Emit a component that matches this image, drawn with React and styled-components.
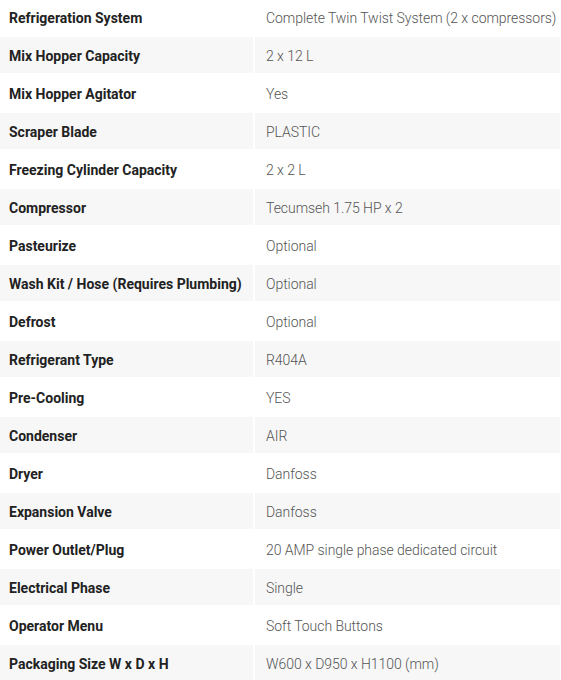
import React from "react";
import styled, { createGlobalStyle } from "styled-components";

const GlobalStyle = createGlobalStyle`
  html, body {
    margin: 0;
    padding: 0;
    background: #ffffff;
  }
  body {
    font-family: Roboto, "Liberation Sans", sans-serif;
  }
`;

const specs = [
  ["Refrigeration System", "Complete Twin Twist System (2 x compressors)"],
  ["Mix Hopper Capacity", "2 x 12 L"],
  ["Mix Hopper Agitator", "Yes"],
  ["Scraper Blade", "PLASTIC"],
  ["Freezing Cylinder Capacity", "2 x 2 L"],
  ["Compressor", "Tecumseh 1.75 HP x 2"],
  ["Pasteurize", "Optional"],
  ["Wash Kit / Hose (Requires Plumbing)", "Optional"],
  ["Defrost", "Optional"],
  ["Refrigerant Type", "R404A"],
  ["Pre-Cooling", "YES"],
  ["Condenser", "AIR"],
  ["Dryer", "Danfoss"],
  ["Expansion Valve", "Danfoss"],
  ["Power Outlet/Plug", "20 AMP single phase dedicated circuit"],
  ["Electrical Phase", "Single"],
  ["Operator Menu", "Soft Touch Buttons"],
  ["Packaging Size W x D x H", "W600 x D950 x H1100 (mm)"]
];

const SpecTable = styled.div`
  display: grid;
  grid-template-columns: 253px 1fr;
  column-gap: 2px;
  row-gap: 2px;
  margin-top: -1px;
  padding-right: 1px;
`;

const Cell = styled.div`
  height: 36px;
  display: flex;
  align-items: center;
  box-sizing: border-box;
  padding-top: 2px;
  background: ${props => (props.shaded ? "#f7f7f7" : "#ffffff")};
  font-size: 14px;
  white-space: nowrap;
  overflow: hidden;
`;

const Label = styled(Cell)`
  padding-left: 9px;
  font-weight: 700;
  color: #222222;
`;

const Value = styled(Cell)`
  padding-left: 11px;
  font-weight: 300;
  color: #555555;
  letter-spacing: -0.05px;
`;

export default function App() {
  return (
    <>
      <GlobalStyle />
      <SpecTable>
        {specs.map(([label, value], i) => (
          <React.Fragment key={label}>
            <Label shaded={i % 2 === 1}>{label}</Label>
            <Value shaded={i % 2 === 1}>{value}</Value>
          </React.Fragment>
        ))}
      </SpecTable>
    </>
  );
}
